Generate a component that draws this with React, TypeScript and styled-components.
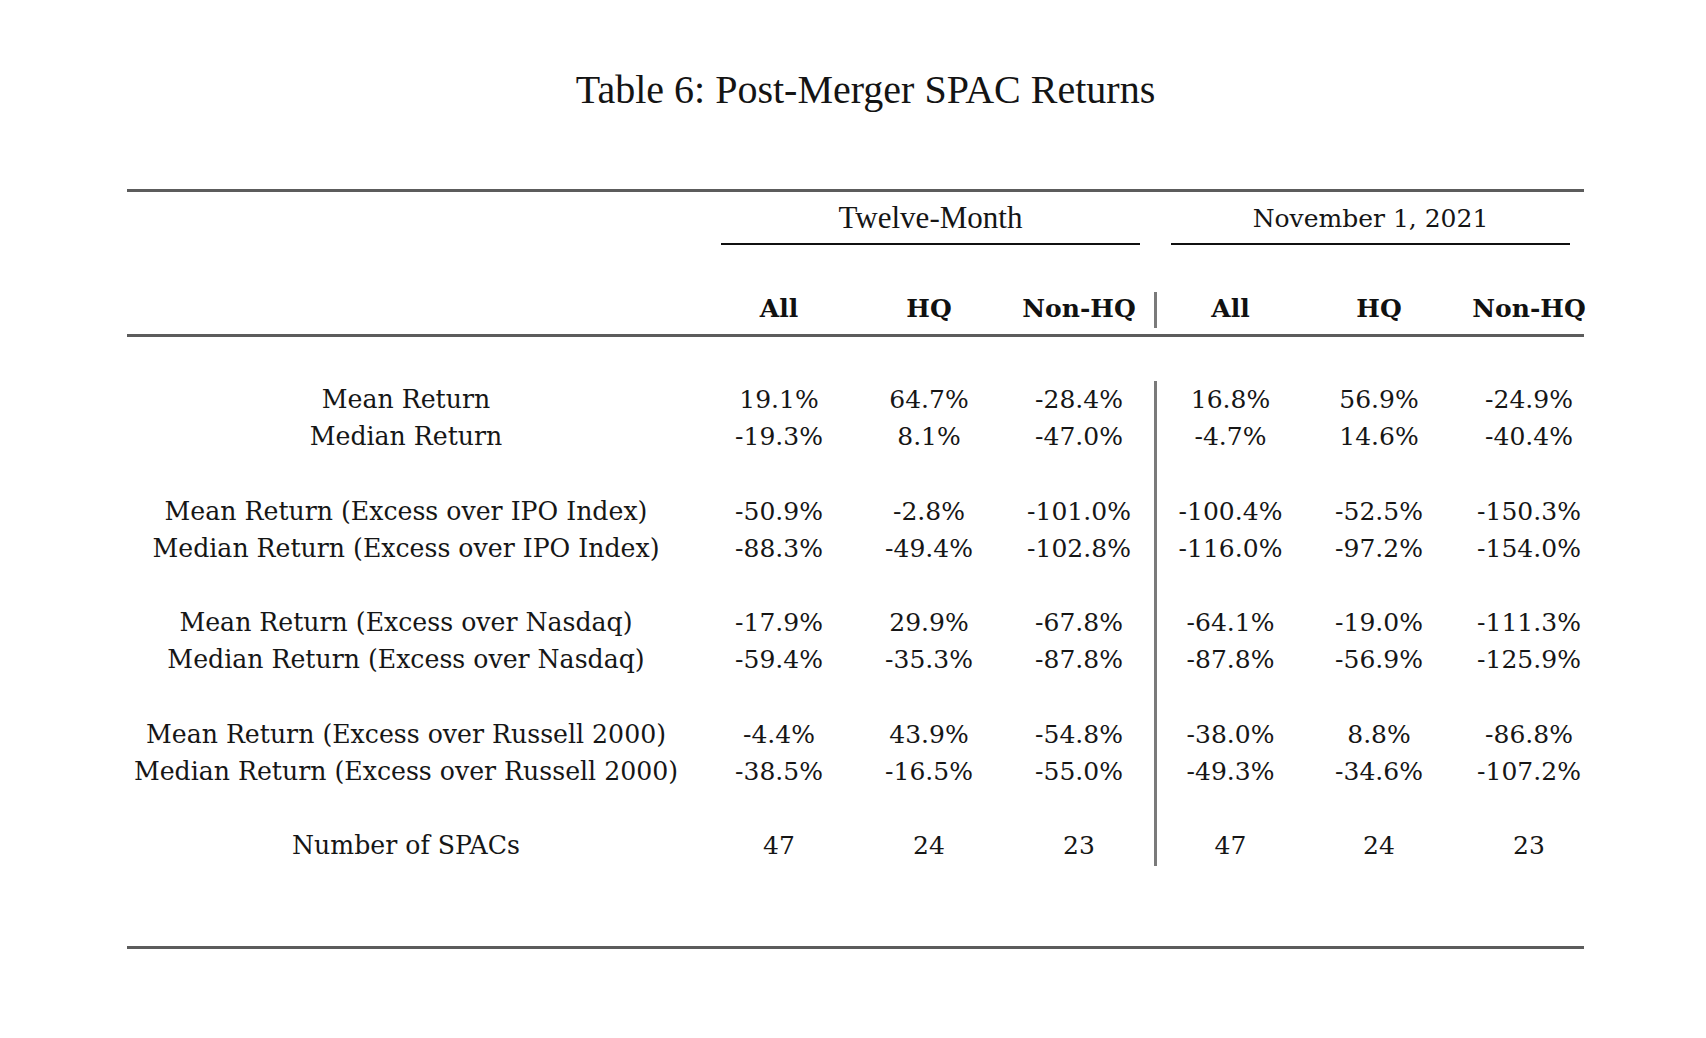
import React from "react";
import styled, { createGlobalStyle } from "styled-components";

const GlobalStyle = createGlobalStyle`
  html, body { margin: 0; padding: 0; background: #ffffff; }
  body { color: #151515; font-family: "DejaVu Serif", "Liberation Serif", serif; }
`;

const Page = styled.div`
  width: 1706px;
  min-height: 1038px;
  box-sizing: border-box;
  padding: 68px 0 0 127px;
  background: #fff;
`;

const Table = styled.div`
  width: 1477px;
`;

const Title = styled.h1`
  margin: 0 0 77px 0;
  font-family: "Liberation Serif", "Times New Roman", serif;
  font-weight: 400;
  font-size: 40px;
  line-height: 44px;
  text-align: center;
  color: #141414;
`;

const Rule = styled.div`
  width: 1457px;
  height: 3px;
  background: #5c5c5c;
  box-shadow: 0 0 0.6px #9a9a9a;
`;

const Grid = styled.div`
  display: grid;
  grid-template-columns: 577px repeat(6, 150px);
`;

const GroupRow = styled(Grid)`
  height: 53px;
`;

const GroupHeader = styled.div<{ $times?: boolean; $trim: number }>`
  grid-column: span 3;
  margin: 0 ${(p) => p.$trim}px 0 17px;
  box-sizing: border-box;
  border-bottom: 2.5px solid #101010;
  text-align: center;
  padding-top: ${(p) => (p.$times ? 8 : 9)}px;
  font-family: ${(p) =>
    p.$times ? `"Liberation Serif", "Times New Roman", serif` : `"DejaVu Serif", serif`};
  font-size: ${(p) => (p.$times ? 31 : 25)}px;
  line-height: 36px;
  color: #151515;
`;

const HeadRow = styled(Grid)`
  height: 89px;
  align-items: end;
  padding-bottom: 6px;
  box-sizing: border-box;
`;

const HeadCell = styled.div<{ $sep?: boolean }>`
  height: 36px;
  box-sizing: border-box;
  padding-bottom: 3px;
  display: flex;
  align-items: flex-end;
  justify-content: center;
  font-family: "DejaVu Serif", serif;
  font-weight: 700;
  font-size: 25px;
  line-height: 33px;
  color: #111;
  border-left: ${(p) => (p.$sep ? "3.5px solid #7a7a7a" : "none")};
`;

const Body = styled(Grid)`
  padding-top: 44px;
  padding-bottom: 82px;
  grid-auto-rows: 37.2px;
`;

const Label = styled.div`
  padding-right: 19px;
  text-align: center;
  font-size: 25.2px;
  line-height: 37.2px;
  white-space: nowrap;
  color: #161616;
`;

const Cell = styled.div<{ $sep?: boolean; $last?: boolean }>`
  box-sizing: border-box;
  text-align: center;
  font-size: 25px;
  line-height: 37.2px;
  white-space: nowrap;
  color: #161616;
  border-left: ${(p) => (p.$sep ? "3.5px solid #7a7a7a" : "none")};
  margin-bottom: ${(p) => (p.$last ? -2 : 0)}px;
`;

type Row = { label: string; values: string[] } | null;

const rows: Row[] = [
  { label: "Mean Return", values: ["19.1%", "64.7%", "-28.4%", "16.8%", "56.9%", "-24.9%"] },
  { label: "Median Return", values: ["-19.3%", "8.1%", "-47.0%", "-4.7%", "14.6%", "-40.4%"] },
  null,
  {
    label: "Mean Return (Excess over IPO Index)",
    values: ["-50.9%", "-2.8%", "-101.0%", "-100.4%", "-52.5%", "-150.3%"],
  },
  {
    label: "Median Return (Excess over IPO Index)",
    values: ["-88.3%", "-49.4%", "-102.8%", "-116.0%", "-97.2%", "-154.0%"],
  },
  null,
  {
    label: "Mean Return (Excess over Nasdaq)",
    values: ["-17.9%", "29.9%", "-67.8%", "-64.1%", "-19.0%", "-111.3%"],
  },
  {
    label: "Median Return (Excess over Nasdaq)",
    values: ["-59.4%", "-35.3%", "-87.8%", "-87.8%", "-56.9%", "-125.9%"],
  },
  null,
  {
    label: "Mean Return (Excess over Russell 2000)",
    values: ["-4.4%", "43.9%", "-54.8%", "-38.0%", "8.8%", "-86.8%"],
  },
  {
    label: "Median Return (Excess over Russell 2000)",
    values: ["-38.5%", "-16.5%", "-55.0%", "-49.3%", "-34.6%", "-107.2%"],
  },
  null,
  { label: "Number of SPACs", values: ["47", "24", "23", "47", "24", "23"] },
];

const heads = ["All", "HQ", "Non-HQ", "All", "HQ", "Non-HQ"];

export default function App() {
  return (
    <Page>
      <GlobalStyle />
      <Table>
        <Title>Table 6: Post-Merger SPAC Returns</Title>
        <Rule />
        <GroupRow>
          <div />
          <GroupHeader $times $trim={14}>
            Twelve-Month
          </GroupHeader>
          <GroupHeader $trim={34}>November 1, 2021</GroupHeader>
        </GroupRow>
        <HeadRow>
          <div />
          {heads.map((h, i) => (
            <HeadCell key={i} $sep={i === 3}>
              {h}
            </HeadCell>
          ))}
        </HeadRow>
        <Rule />
        <Body>
          {rows.map((r, ri) => (
            <React.Fragment key={ri}>
              <Label>{r ? r.label : ""}</Label>
              {(r ? r.values : ["", "", "", "", "", ""]).map((v, ci) => (
                <Cell key={ci} $sep={ci === 3} $last={ri === rows.length - 1}>
                  {v}
                </Cell>
              ))}
            </React.Fragment>
          ))}
        </Body>
        <Rule />
      </Table>
    </Page>
  );
}
